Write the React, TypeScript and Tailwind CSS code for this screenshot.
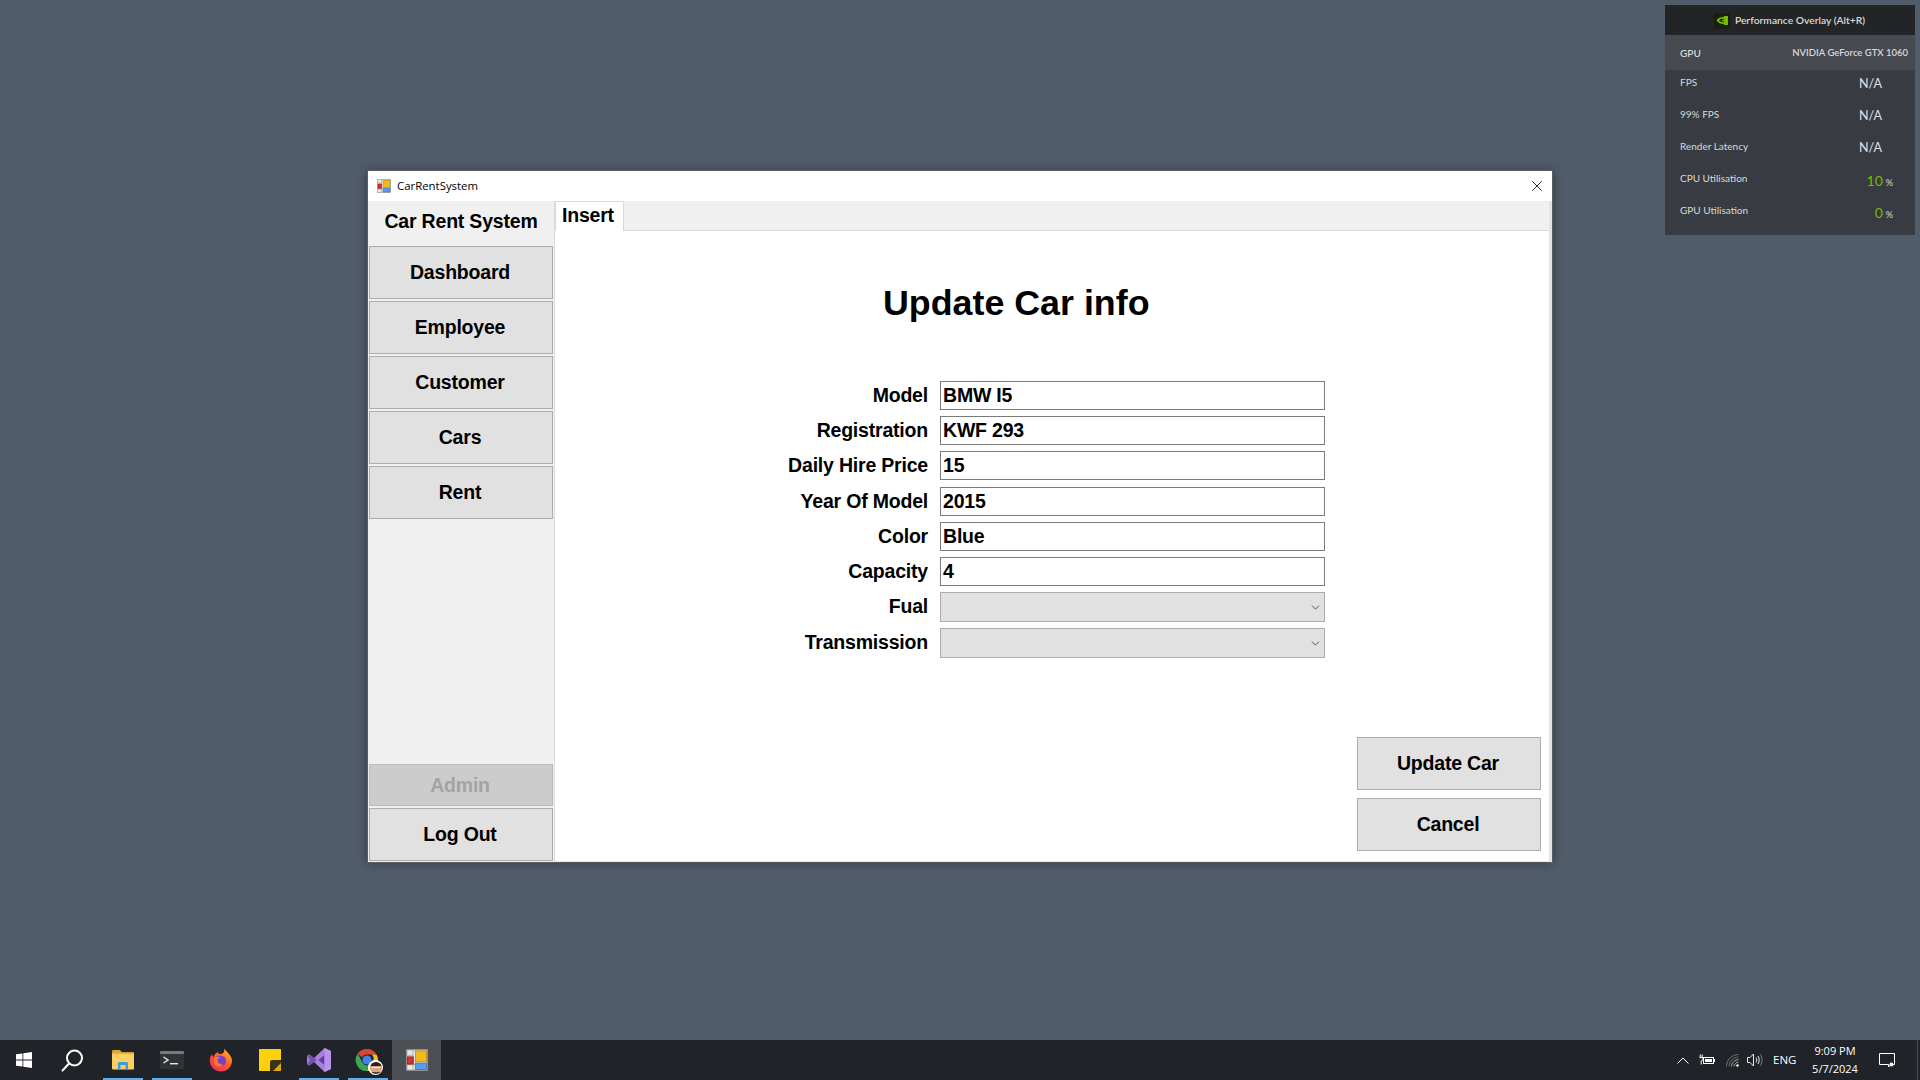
import { ChevronDown, X } from "lucide-react";

const sans = "font-['Liberation_Sans',Arial,sans-serif]";

const navItems = ["Dashboard", "Employee", "Customer", "Cars", "Rent"];

const fields = [
  { label: "Model", value: "BMW I5", gap: "" },
  { label: "Registration", value: "KWF 293", gap: "mt-[6px]" },
  { label: "Daily Hire Price", value: "15", gap: "mt-[6px]" },
  { label: "Year Of Model", value: "2015", gap: "mt-[7px]" },
  { label: "Color", value: "Blue", gap: "mt-[6px]" },
  { label: "Capacity", value: "4", gap: "mt-[6px]" },
];

const stats = [
  { label: "FPS", value: "N/A" },
  { label: "99% FPS", value: "N/A" },
  { label: "Render Latency", value: "N/A" },
  { label: "CPU Utilisation", value: "10", unit: "%" },
  { label: "GPU Utilisation", value: "0", unit: "%" },
];

const AppIcon = ({ size }: { size: number }) => (
  <svg width={size} height={size} viewBox="0 0 14 14">
    <rect x="0.5" y="0.5" width="13" height="13" fill="#e8e8e8" stroke="#9a9a9a" strokeWidth="0.7" />
    <path d="M4.5 0.5V13.5M0.5 4H4.5M0.5 10H13.5M9 10V13.5" stroke="#a8a8a8" strokeWidth="0.6" />
    <rect x="1" y="5" width="3.6" height="4.6" fill="#d8302c" stroke="#8a1c18" strokeWidth="0.5" />
    <rect x="6" y="1.2" width="7" height="7" fill="#f0b91c" stroke="#b98a10" strokeWidth="0.5" />
    <rect x="6" y="9" width="7" height="4" fill="#5b9be8" stroke="#3a70b8" strokeWidth="0.5" />
  </svg>
);

const NvidiaMark = () => (
  <span className="flex h-[16px] w-[16px] items-center justify-center bg-[#1a1f14]">
    <svg width="12" height="9" viewBox="0 0 12 9">
      <path d="M0.5 4.5C2.5 1.6 5 0.8 8 1V0H12V9H8V8C5 8.2 2.5 7.2 0.5 4.5Z" fill="#76b900" />
      <path d="M3 4.5C4.5 3 6 2.7 8 2.9V6.2C6 6.4 4.5 6 3 4.5Z" fill="#1a1f14" />
      <circle cx="7" cy="4.5" r="1.1" fill="#76b900" />
    </svg>
  </span>
);

const PerformanceOverlay = () => (
  <div className="absolute left-[1665px] top-[5px] flex h-[230px] w-[250px] flex-col bg-[#383b41] font-['Lato',sans-serif] text-[#d8d9db]">
    <div className="flex h-[30px] items-center justify-center gap-[5px] bg-[#232426] pr-[1px] pt-[1px] font-semibold">
      <NvidiaMark />
      <span className="text-[10.3px]">Performance Overlay (Alt+R)</span>
    </div>
    <div className="flex h-[35px] items-center justify-between bg-[#46494f] pl-[15px] pr-[7px] pt-[1px] font-semibold">
      <span className="text-[10px]">GPU</span>
      <span className="text-[9.5px]">NVIDIA GeForce GTX 1060</span>
    </div>
    <div className="mt-[-4px] flex flex-col pl-[15px] pr-[22px]">
      {stats.map((stat) => (
        <div key={stat.label} className="flex h-[32px] items-center justify-between">
          <span className="text-[10px]">{stat.label}</span>
          <span className="mt-[5px] flex w-[50px] items-baseline justify-end">
            <span className={stat.unit ? "text-[14px] text-[#76b900]" : "mr-[11px] text-[12.5px] font-medium"}>
              {stat.value}
            </span>
            {stat.unit && <span className="ml-[3px] text-[9px]">{stat.unit}</span>}
          </span>
        </div>
      ))}
    </div>
  </div>
);

const NavButton = ({ label, disabled }: { label: string; disabled?: boolean }) => (
  <button
    className={`flex w-[184px] items-center justify-center border pr-[2px] text-[19.5px] font-bold tracking-[-0.2px] ${
      disabled
        ? "h-[42px] border-[#bcbcbc] bg-[#cccccc] pt-[1px] text-[#a3a3a3]"
        : "h-[53px] border-[#adadad] bg-[#e1e1e1] text-black"
    }`}
  >
    {label}
  </button>
);

const AppWindow = () => (
  <div
    className={`absolute left-[367px] top-[170px] flex h-[693px] w-[1186px] flex-col border border-[#5a5f66] bg-white shadow-[0_0_10px_rgba(0,0,0,0.35)] ${sans}`}
  >
    {/* title bar */}
    <div className="flex h-[30px] shrink-0 items-center bg-white pl-[9px] pr-[6px]">
      <AppIcon size={14} />
      <span className="ml-[6px] font-['Open_Sans',sans-serif] text-[11.4px] text-black">CarRentSystem</span>
      <X size={18} strokeWidth={1.1} className="ml-auto text-black" />
    </div>

    <div className="flex min-h-0 flex-1">
      {/* sidebar */}
      <aside className="flex w-[187px] shrink-0 flex-col border-r border-[#dcdcdc] bg-[#f0f0f0] pb-[1px]">
        <div className="flex h-[45px] items-center justify-center pb-[3px] text-[19.5px] font-bold tracking-[-0.2px] text-black">
          Car Rent System
        </div>
        <div className="flex flex-col gap-[2px] pl-[1px]">
          {navItems.map((item) => (
            <NavButton key={item} label={item} />
          ))}
        </div>
        <div className="mt-auto flex flex-col gap-[2px] pl-[1px]">
          <NavButton label="Admin" disabled />
          <NavButton label="Log Out" />
        </div>
      </aside>

      {/* main */}
      <main className="flex min-w-0 flex-1 flex-col border-b border-r-[3px] border-[#e4e4e4]">
        <div className="flex h-[30px] shrink-0 border-b border-[#d9d9d9] bg-[#f0f0f0]">
          <div className="mb-[-1px] flex w-[69px] items-start border border-b-0 border-[#d9d9d9] bg-white pl-[6px] text-[19.5px] font-bold leading-[27px] tracking-[-0.2px] text-black">
            Insert
          </div>
        </div>
        <div className="flex min-h-0 flex-1 flex-col">
          <h1 className="ml-[328px] mt-[51px] whitespace-nowrap text-[35.8px] font-bold leading-[42px] text-black">
            Update Car info
          </h1>
          <div className="mt-[57px] flex flex-col text-[19.5px] font-bold tracking-[-0.2px] text-black">
            {fields.map((field) => (
              <div key={field.label} className={`flex items-center ${field.gap}`}>
                <label className="w-[373px] text-right leading-none">{field.label}</label>
                <div className="ml-[12px] flex h-[29px] w-[385px] items-center border border-[#7a7a7a] bg-white pl-[2px] leading-none">
                  {field.value}
                </div>
              </div>
            ))}
            {["Fual", "Transmission"].map((label) => (
              <div key={label} className="mt-[6px] flex items-center">
                <label className="w-[373px] text-right leading-none">{label}</label>
                <div className="ml-[12px] flex h-[30px] w-[385px] items-center justify-end border border-[#adadad] bg-[#e1e1e1] pr-[2px]">
                  <ChevronDown size={13} strokeWidth={1.5} className="text-[#333333]" />
                </div>
              </div>
            ))}
          </div>
          <div className="mb-[10px] mr-[8px] mt-auto flex flex-col items-end gap-[8px] text-[19.5px] font-bold tracking-[-0.2px] text-black">
            <button className="flex h-[53px] w-[184px] items-center justify-center border border-[#adadad] bg-[#e1e1e1] pr-[2px]">
              Update Car
            </button>
            <button className="flex h-[53px] w-[184px] items-center justify-center border border-[#adadad] bg-[#e1e1e1] pr-[2px]">
              Cancel
            </button>
          </div>
        </div>
      </main>
    </div>
  </div>
);

const TaskItem = ({ children, open, active }: { children: React.ReactNode; open?: boolean; active?: boolean }) => (
  <div className={`relative flex h-[40px] w-[49px] items-center justify-center ${active ? "bg-[#4c4f54]" : ""}`}>
    {children}
    {open && <span className="absolute bottom-0 left-[5px] h-[2px] w-[40px] bg-[#63aee8]" />}
  </div>
);

const Taskbar = () => (
  <div className="flex h-[40px] shrink-0 items-center bg-[#202327] font-['Open_Sans',sans-serif] text-white">
    <div className="flex h-[40px] w-[48px] items-center justify-center">
      <svg width="16" height="16" viewBox="0 0 16 16" fill="#ffffff">
        <path d="M0 2.3L6.5 1.4V7.6H0ZM7.3 1.3L16 0V7.6H7.3ZM0 8.4H6.5V14.6L0 13.7ZM7.3 8.4H16V16L7.3 14.7Z" />
      </svg>
    </div>
    <div className="mr-[2px] flex h-[40px] w-[48px] items-center justify-center">
      <svg width="23" height="23" viewBox="0 0 23 23" fill="none" stroke="#ffffff" strokeWidth="2">
        <circle cx="13.5" cy="9" r="7.5" />
        <path d="M8 14.5L1.5 21.5" strokeLinecap="round" />
      </svg>
    </div>
    <TaskItem open>
      <svg width="22" height="20" viewBox="0 0 22 20">
        <path d="M0 1.5C0 0.7 0.6 0 1.4 0H8L10 2.5H0Z" fill="#e0a526" />
        <rect x="0" y="2.5" width="22" height="17" rx="1" fill="#fbd261" />
        <rect x="0" y="2.5" width="22" height="2" fill="#f3b93d" />
        <path d="M6 19.5V13.5C6 12.7 6.6 12 7.4 12H14.6C15.4 12 16 12.7 16 13.5V19.5H13.5V15H8.5V19.5Z" fill="#3b9ce0" />
      </svg>
    </TaskItem>
    <TaskItem open>
      <svg width="24" height="18" viewBox="0 0 24 18">
        <rect width="24" height="18" rx="1" fill="#303234" />
        <rect width="24" height="3" rx="1" fill="#77797c" />
        <path d="M3.5 6L8 9L3.5 12" stroke="#e8e8e8" strokeWidth="1.4" fill="none" />
        <rect x="10" y="12" width="8" height="1.4" fill="#e8e8e8" />
      </svg>
    </TaskItem>
    <TaskItem>
      <svg width="24" height="24" viewBox="0 0 24 24">
        <defs>
          <linearGradient id="ffBody" x1="0.9" y1="0" x2="0.1" y2="1">
            <stop offset="0" stopColor="#ffc21a" />
            <stop offset="0.5" stopColor="#ff5a2c" />
            <stop offset="1" stopColor="#f0246a" />
          </linearGradient>
        </defs>
        <path d="M15 0.5C17 3 21 6 22.5 10C24.5 16.5 19.5 23.5 12 23.5C5.5 23.5 0.8 18.5 0.8 12.5C0.8 9.5 1.8 7.5 3 6C3 7.5 3.5 8.5 4.5 9C5 6.5 7 4.5 9.5 4C9 5.5 9.5 6 11 6C14.5 6 16 3.5 15 0.5Z" fill="url(#ffBody)" />
        <circle cx="11.5" cy="13" r="5.6" fill="#7d3fc7" />
        <path d="M5 11C7 9 9.5 8.5 12 9.5C10 9.5 8.5 10.5 8.5 12C8.5 15 11 17 14 16.5C12 19.5 7 19.5 5 16Z" fill="#ff7a20" />
      </svg>
    </TaskItem>
    <TaskItem>
      <svg width="22" height="22" viewBox="0 0 22 22">
        <path d="M1 0H21C21.6 0 22 0.4 22 1V13L13 22H1C0.4 22 0 21.6 0 21V1C0 0.4 0.4 0 1 0Z" fill="#fdd20a" />
        <path d="M11 22V13C11 12 11.6 11 13 11H22V13L14 22Z" fill="#3a3216" />
        <path d="M14 22L22 14V21C22 21.6 21.6 22 21 22Z" fill="#e3a90c" />
      </svg>
    </TaskItem>
    <TaskItem open>
      <svg width="24" height="24" viewBox="0 0 24 24">
        <path d="M17.5 0L24 3V21L17.5 24L7 14L2.5 17.5L0 16.2V7.8L2.5 6.5L7 10Z" fill="#a77fe0" />
        <path d="M17.5 7L11.5 12L17.5 17Z" fill="#604098" />
        <path d="M0 7.8L2.5 6.5L7 10L10 12L7 14L2.5 17.5L0 16.2L3 12Z" fill="#7452b0" />
        <path d="M17.5 0L24 3V21L17.5 24Z" fill="#b794ea" />
      </svg>
    </TaskItem>
    <TaskItem open>
      <div className="relative h-[24px] w-[25px]">
        <svg width="24" height="24" viewBox="0 0 24 24">
          <path d="M12 1A11 11 0 0 1 21.5 6.5H12A5.5 5.5 0 0 0 7 9.5L2.8 5.5A11 11 0 0 1 12 1Z" fill="#e04434" />
          <path d="M21.5 6.5A11 11 0 0 1 11.5 23L16.6 15A5.5 5.5 0 0 0 16.8 6.5Z" fill="#f8c22c" />
          <path d="M11.5 23A11 11 0 0 1 2.8 5.5L7.5 14.5A5.5 5.5 0 0 0 14 17.2Z" fill="#3aa757" />
          <circle cx="12" cy="12" r="4.6" fill="#3f83ee" />
        </svg>
        <span className="absolute bottom-[-3px] right-[-3px] flex h-[15px] w-[15px] items-center justify-center rounded-full bg-white">
          <span className="relative block h-[12px] w-[12px] overflow-hidden rounded-full bg-[#d9a584]">
            <span className="absolute left-0 top-0 h-[4px] w-[12px] bg-[#2b211d]" />
            <span className="absolute left-[2px] top-[5px] h-[1px] w-[8px] bg-[#f2f2f2]" />
            <span className="absolute bottom-0 left-0 h-[2px] w-[12px] bg-[#5a4038]" />
          </span>
        </span>
      </div>
    </TaskItem>
    <TaskItem active>
      <AppIcon size={22} />
    </TaskItem>

    {/* tray */}
    <div className="ml-auto flex h-[40px] items-center">
      <svg width="12" height="7" viewBox="0 0 12 7" fill="none" stroke="#ffffff" strokeWidth="1">
        <path d="M0.5 6.5L6 1L11.5 6.5" />
      </svg>
      <svg className="ml-[10px]" width="16" height="12" viewBox="0 0 16 12" fill="none" stroke="#ffffff">
        <rect x="4.5" y="3.5" width="10" height="6" />
        <rect x="6" y="5" width="7" height="3" fill="#ffffff" stroke="none" />
        <path d="M15.5 5V8M0.5 3.5H4V5.5L2.2 7V10.5" strokeWidth="1" />
        <path d="M1.2 0.5V3M3.2 0.5V3" strokeWidth="1" />
      </svg>
      <svg className="ml-[11px]" width="13" height="13" viewBox="0 0 13 13" fill="none" stroke="#cfd0d2" strokeWidth="0.8">
        <path d="M0.5 12.5C0.5 6 6 0.5 12.5 0.5" opacity="0.55" />
        <path d="M3 12.5C3 7.5 7.5 3 12.5 3" opacity="0.55" />
        <path d="M5.5 12.5C5.5 9 9 5.5 12.5 5.5" />
        <path d="M8 12.5C8 10.5 10.5 8 12.5 8" />
        <circle cx="11.5" cy="11.5" r="1.2" fill="#ffffff" stroke="none" />
      </svg>
      <svg className="ml-[8px]" width="16" height="14" viewBox="0 0 16 14" fill="none" stroke="#ffffff" strokeWidth="0.9">
        <path d="M0.5 4.5H3L6.5 1V13L3 9.5H0.5Z" />
        <path d="M9 4.5C10 6 10 8 9 9.5" />
        <path d="M11 3C12.6 5.5 12.6 8.5 11 11" />
        <path d="M13.2 1.2C15.6 4.5 15.6 9.5 13.2 12.8" stroke="#8a8c8f" />
      </svg>
      <span className="ml-[10px] w-[23px] text-[11.5px]">ENG</span>
      <div className="ml-[11px] flex w-[56px] flex-col items-center text-[11px] leading-[18px]">
        <span>9:09 PM</span>
        <span>5/7/2024</span>
      </div>
      <svg className="ml-[16px] mr-[22px]" width="16" height="15" viewBox="0 0 16 15" fill="none" stroke="#ffffff" strokeWidth="1">
        <path d="M0.5 0.5H15.5V11.5H12L9.5 14V11.5H0.5Z" />
        <circle cx="12.5" cy="11.5" r="2" fill="#ffffff" stroke="none" />
      </svg>
      <span className="h-[40px] w-[1px] bg-[#4a4d52]" />
      <span className="w-[2px]" />
    </div>
  </div>
);

export default function App() {
  return (
    <div className="flex h-screen w-full flex-col overflow-hidden bg-[#515c6b]">
      <div className="relative min-h-0 flex-1">
        <PerformanceOverlay />
        <AppWindow />
      </div>
      <Taskbar />
    </div>
  );
}
